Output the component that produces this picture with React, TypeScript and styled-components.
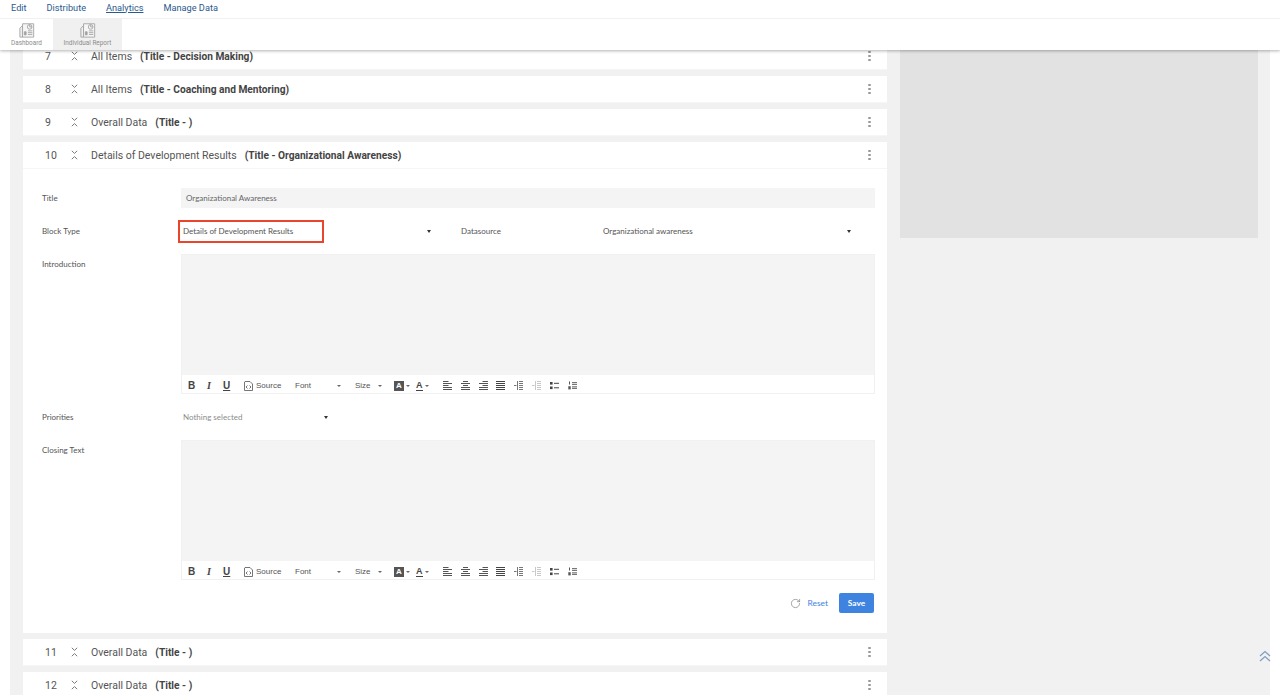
import React from 'react';
import styled, { createGlobalStyle } from 'styled-components';
import { RotateCw } from 'lucide-react';

const GlobalStyle = createGlobalStyle`
  html, body {
    margin: 0;
    padding: 0;
    height: 100%;
    overflow: hidden;
    background: #fff;
    font-family: Roboto, 'Noto Sans', sans-serif;
  }
  * { box-sizing: border-box; }
`;

const navItems = ['Edit', 'Distribute', 'Analytics', 'Manage Data'];

const rowsBefore = [
  { num: 7, name: 'All Items', title: 'Decision Making' },
  { num: 8, name: 'All Items', title: 'Coaching and Mentoring' },
  { num: 9, name: 'Overall Data', title: '' },
];

const rowsAfter = [
  { num: 11, name: 'Overall Data', title: '' },
  { num: 12, name: 'Overall Data', title: '' },
];

function ReportIcon() {
  return (
    <svg width="16" height="16" viewBox="0 0 18 18" fill="none" stroke="#a3a3a3" strokeWidth="1">
      <path d="M1 7 L4 4 V17 H1 Z" fill="#efefef" />
      <path d="M4 2 H16.5 V17 H4 Z" fill="#f6f6f6" />
      <circle cx="12" cy="5.5" r="2.6" />
      <path d="M12 5.5 V2.9 M12 5.5 H14.6" />
      <path d="M6 14.5 H8 V11 H6 Z" fill="#a3a3a3" />
      <path d="M10 10 H15 M10 12 H15 M10 14 H15" />
    </svg>
  );
}

function CollapseIcon() {
  return (
    <svg width="7" height="10" viewBox="0 0 7 10" fill="none" stroke="#7a7a7a" strokeWidth="1">
      <path d="M0.8 0.8 L3.5 3.4 L6.2 0.8" />
      <path d="M0.8 9.2 L3.5 6.6 L6.2 9.2" />
    </svg>
  );
}

function LinesIcon({ d, color = '#555' }: { d: string; color?: string }) {
  return (
    <svg width="9" height="9" viewBox="0 0 9 9" stroke={color} strokeWidth="1" fill="none">
      <path d={d} />
    </svg>
  );
}

function BulletIcon() {
  return (
    <svg width="9" height="9" viewBox="0 0 9 9" fill="#444">
      <rect x="0" y="1" width="2.6" height="2.6" />
      <rect x="0" y="5.5" width="2.6" height="2.6" />
      <rect x="4" y="1.8" width="5" height="1" />
      <rect x="4" y="6.3" width="5" height="1" />
    </svg>
  );
}

function NumberIcon() {
  return (
    <svg width="9" height="9" viewBox="0 0 9 9" fill="#555">
      <rect x="1" y="0.5" width="1" height="3" />
      <rect x="0.3" y="5.2" width="2.4" height="3.2" />
      <rect x="4" y="1.2" width="5" height="1" />
      <rect x="4" y="3" width="5" height="0.8" />
      <rect x="4" y="5.4" width="5" height="1" />
      <rect x="4" y="7.2" width="5" height="0.8" />
    </svg>
  );
}

const indentPath = 'M5 0.5 H9 M5 2.5 H9 M5 4.5 H9 M5 6.5 H9 M5 8.5 H9 M3.5 0 V9 M0 4.5 H2.5';

function EditorToolbar() {
  return (
    <Toolbar>
      <BoldBtn>B</BoldBtn>
      <ItalicBtn>I</ItalicBtn>
      <UnderBtn>U</UnderBtn>
      <SourceBtn>
        <svg width="9" height="10" viewBox="0 0 9 10" fill="none" stroke="#666" strokeWidth="0.9">
          <path d="M1 0.5 H6 L8.5 3 V9.5 H0.5 V1 Z" />
          <path d="M3.5 4.5 L2 6 L3.5 7.5 M5.5 4.5 L7 6 L5.5 7.5" />
        </svg>
        Source
      </SourceBtn>
      <Combo $width={46} $gap={14}>
        Font
        <Caret />
      </Combo>
      <Combo $width={27} $gap={12}>
        Size
        <Caret />
      </Combo>
      <ColorBtn>
        <BgA>A</BgA>
        <Caret />
      </ColorBtn>
      <ColorBtn>
        <TextA>A</TextA>
        <Caret />
      </ColorBtn>
      <IconGroup>
        <LinesIcon d="M0 0.5 H5.5 M0 2.5 H9 M0 4.5 H5.5 M0 6.5 H9 M0 8.5 H9" />
        <LinesIcon d="M2 0.5 H7 M0 2.5 H9 M2 4.5 H7 M0 6.5 H9 M0 8.5 H9" />
        <LinesIcon d="M3.5 0.5 H9 M0 2.5 H9 M3.5 4.5 H9 M0 6.5 H9 M0 8.5 H9" />
        <LinesIcon d="M0 0.5 H9 M0 2.5 H9 M0 4.5 H9 M0 6.5 H9 M0 8.5 H9" color="#444" />
        <LinesIcon d={indentPath} color="#777" />
        <LinesIcon d={indentPath} color="#c8c8c8" />
        <BulletIcon />
        <NumberIcon />
      </IconGroup>
    </Toolbar>
  );
}

function RowHead({ num, name, title }: { num: number; name: string; title: string }) {
  return (
    <RowHeader>
      <RowNum>{num}</RowNum>
      <CollapseIcon />
      <RowName>{name}</RowName>
      <RowTitle>(Title - {title})</RowTitle>
      <Kebab>
        <span />
        <span />
        <span />
      </Kebab>
    </RowHeader>
  );
}

export default function App() {
  return (
    <Page>
      <GlobalStyle />
      <Header>
        <Nav>
          {navItems.map((item) => (
            <NavLink key={item} $active={item === 'Analytics'}>
              {item}
            </NavLink>
          ))}
        </Nav>
        <SubBar>
          <SubTab $width={53}>
            <ReportIcon />
            <SubLabel>Dashboard</SubLabel>
          </SubTab>
          <SubTab $width={69} $active>
            <ReportIcon />
            <SubLabel>Individual Report</SubLabel>
          </SubTab>
        </SubBar>
      </Header>

      <Canvas>
        <ListColumn>
          {rowsBefore.map((r) => (
            <Row key={r.num}>
              <RowHead {...r} />
            </Row>
          ))}

          <Row>
            <RowHead num={10} name="Details of Development Results" title="Organizational Awareness" />
            <RowBody>
              <FormRow>
                <FieldLabel>Title</FieldLabel>
                <TextField>Organizational Awareness</TextField>
              </FormRow>
              <FormRow>
                <FieldLabel>Block Type</FieldLabel>
                <SelectWrap $width={253}>
                  <SelectText>Details of Development Results</SelectText>
                  <Highlight />
                  <SelectCaret />
                </SelectWrap>
                <DataLabel>Datasource</DataLabel>
                <SelectWrap $width={253}>
                  <SelectText>Organizational awareness</SelectText>
                  <SelectCaret />
                </SelectWrap>
              </FormRow>
              <EditorRow>
                <FieldLabel>Introduction</FieldLabel>
                <Editor>
                  <EditorArea />
                  <EditorToolbar />
                </Editor>
              </EditorRow>
              <FormRow>
                <FieldLabel>Priorities</FieldLabel>
                <SelectWrap $width={150}>
                  <SelectText $muted>Nothing selected</SelectText>
                  <SelectCaret />
                </SelectWrap>
              </FormRow>
              <EditorRow>
                <FieldLabel>Closing Text</FieldLabel>
                <Editor>
                  <EditorArea />
                  <EditorToolbar />
                </Editor>
              </EditorRow>
              <Actions>
                <RotateCw size={11} color="#888" strokeWidth={1.6} />
                <ResetLink>Reset</ResetLink>
                <SaveButton>Save</SaveButton>
              </Actions>
            </RowBody>
          </Row>

          {rowsAfter.map((r) => (
            <Row key={r.num}>
              <RowHead {...r} />
            </Row>
          ))}
        </ListColumn>

        <PreviewBox />
      </Canvas>

      <ToTop>
        <svg width="12" height="12" viewBox="0 0 12 12" fill="none" stroke="#7f9fc4" strokeWidth="1.3">
          <path d="M1 6 L6 1.5 L11 6" />
          <path d="M1 11 L6 6.5 L11 11" />
        </svg>
      </ToTop>
    </Page>
  );
}

const smallFont = `Lato, 'Noto Sans', sans-serif`;

const Page = styled.div`
  position: relative;
  height: 100vh;
  overflow: hidden;
  padding: 0 10px;
  background: #fff;
`;

const Header = styled.header`
  position: absolute;
  top: 0;
  left: 0;
  right: 0;
  z-index: 5;
  background: #fff;
  box-shadow: 0 1px 3px rgba(0, 0, 0, 0.3);
`;

const Nav = styled.nav`
  height: 19px;
  display: flex;
  align-items: center;
  gap: 20px;
  padding: 0 0 3px 11px;
  border-bottom: 1px solid #f0f0f0;
`;

const NavLink = styled.a<{ $active?: boolean }>`
  font-size: 9.2px;
  line-height: 14px;
  color: #2a5a8e;
  text-decoration: ${(p) => (p.$active ? 'underline' : 'none')};
`;

const SubBar = styled.div`
  height: 31px;
  display: flex;
`;

const SubTab = styled.div<{ $active?: boolean; $width: number }>`
  display: flex;
  flex-direction: column;
  align-items: center;
  width: ${(p) => p.$width}px;
  padding-top: 3px;
  background: ${(p) => (p.$active ? '#f0f0f0' : 'transparent')};
`;

const SubLabel = styled.span`
  font-size: 6.4px;
  line-height: 8px;
  margin-top: 1px;
  white-space: nowrap;
  color: #8c8c8c;
`;

const Canvas = styled.main`
  height: 100%;
  background: #f1f1f1;
  display: flex;
  align-items: flex-start;
  padding: 43px 0 0 13px;
`;

const ListColumn = styled.div`
  width: 864px;
  flex: none;
  display: flex;
  flex-direction: column;
  gap: 6px;
`;

const Row = styled.section`
  background: #fff;
`;

const RowHeader = styled.div`
  height: 27px;
  display: flex;
  align-items: center;
  padding: 0 16px 0 21px;
  border-bottom: 1px solid #f6f6f6;
`;

const RowNum = styled.span`
  width: 27px;
  padding-left: 1px;
  font-size: 10.5px;
  color: #555;
`;

const RowName = styled.span`
  margin-left: 13px;
  font-size: 10.5px;
  color: #555;
`;

const RowTitle = styled.strong`
  margin-left: 8px;
  font-size: 10.2px;
  font-weight: 700;
  color: #444;
`;

const Kebab = styled.div`
  margin-left: auto;
  display: flex;
  flex-direction: column;
  gap: 1.4px;

  span {
    width: 2.6px;
    height: 2.6px;
    border-radius: 50%;
    background: #999;
  }
`;

const RowBody = styled.div`
  padding: 19px 12px 20px 19px;
  display: flex;
  flex-direction: column;
`;

const FormRow = styled.div`
  display: flex;
  align-items: center;
  height: 20px;
  margin-bottom: 13px;
`;

const EditorRow = styled.div`
  display: flex;
  align-items: flex-start;
  margin-bottom: 13px;
`;

const FieldLabel = styled.label`
  flex: none;
  width: 139px;
  font: 8px/20px ${smallFont};
  color: #555;
`;

const TextField = styled.div`
  flex: 1;
  height: 20px;
  background: #f4f4f4;
  padding: 0 5px;
  font: 8px/20px ${smallFont};
  color: #666;
`;

const SelectWrap = styled.div<{ $width: number }>`
  position: relative;
  flex: none;
  width: ${(p) => p.$width}px;
  height: 20px;
  padding-left: 2px;
  display: flex;
  align-items: center;
`;

const SelectText = styled.span<{ $muted?: boolean }>`
  font: 8px ${smallFont};
  color: ${(p) => (p.$muted ? '#8c8c8c' : '#555')};
`;

const SelectCaret = styled.i`
  position: absolute;
  right: 3px;
  top: 9px;
  width: 0;
  height: 0;
  border-left: 2.5px solid transparent;
  border-right: 2.5px solid transparent;
  border-top: 3px solid #333;
`;

const Highlight = styled.div`
  position: absolute;
  left: -3px;
  top: -1px;
  width: 146px;
  height: 23px;
  border: 2px solid #e8452c;
`;

const DataLabel = styled.span`
  flex: none;
  width: 140px;
  margin-left: 27px;
  font: 8px ${smallFont};
  color: #555;
`;

const Editor = styled.div`
  flex: 1;
  border: 1px solid #f1f1f1;
`;

const EditorArea = styled.div`
  height: 120px;
  background: #f4f4f4;
`;

const Toolbar = styled.div`
  height: 18px;
  background: #fff;
  display: flex;
  align-items: center;
  padding: 3px 0 0 6px;
  color: #555;
`;

const BoldBtn = styled.span`
  width: 18px;
  font: 700 10px 'Liberation Sans', sans-serif;
  color: #444;
`;

const ItalicBtn = styled.span`
  width: 17px;
  padding-left: 1px;
  font: italic 700 10px 'Liberation Serif', serif;
  color: #444;
`;

const UnderBtn = styled.span`
  width: 21px;
  font: 700 10px 'Liberation Sans', sans-serif;
  text-decoration: underline;
  color: #444;
`;

const SourceBtn = styled.span`
  display: flex;
  align-items: center;
  gap: 3px;
  width: 51px;
  font: 8px 'Liberation Sans', sans-serif;
`;

const Combo = styled.span<{ $width: number; $gap: number }>`
  display: flex;
  align-items: center;
  justify-content: space-between;
  width: ${(p) => p.$width}px;
  margin-right: ${(p) => p.$gap}px;
  font: 8px 'Liberation Sans', sans-serif;
`;

const Caret = styled.i`
  width: 0;
  height: 0;
  margin-left: 2px;
  border-left: 2px solid transparent;
  border-right: 2px solid transparent;
  border-top: 2.5px solid #666;
`;

const ColorBtn = styled.span`
  display: flex;
  align-items: center;
  width: 22px;
`;

const BgA = styled.span`
  width: 10px;
  height: 10px;
  background: #555;
  color: #fff;
  font: 700 8px/10px 'Liberation Sans', sans-serif;
  text-align: center;
`;

const TextA = styled.span`
  font: 700 9px/9px 'Liberation Sans', sans-serif;
  border-bottom: 1px solid #444;
  color: #444;
`;

const IconGroup = styled.span`
  display: flex;
  align-items: center;
  gap: 8.8px;
  margin-left: 5px;
`;

const Actions = styled.div`
  display: flex;
  align-items: center;
  justify-content: flex-end;
  height: 20px;
  padding-right: 1px;
`;

const ResetLink = styled.a`
  margin: 0 11px 0 7px;
  font: 8.4px ${smallFont};
  color: #3d83df;
`;

const SaveButton = styled.button`
  width: 35px;
  height: 20px;
  border: none;
  border-radius: 2px;
  background: #3d83df;
  color: #fff;
  font: 700 8.4px ${smallFont};
`;

const PreviewBox = styled.aside`
  width: 358px;
  height: 238px;
  margin: -43px 0 0 13px;
  background: #e2e2e2;
`;

const ToTop = styled.div`
  position: absolute;
  right: 9px;
  top: 650px;
  line-height: 0;
`;
